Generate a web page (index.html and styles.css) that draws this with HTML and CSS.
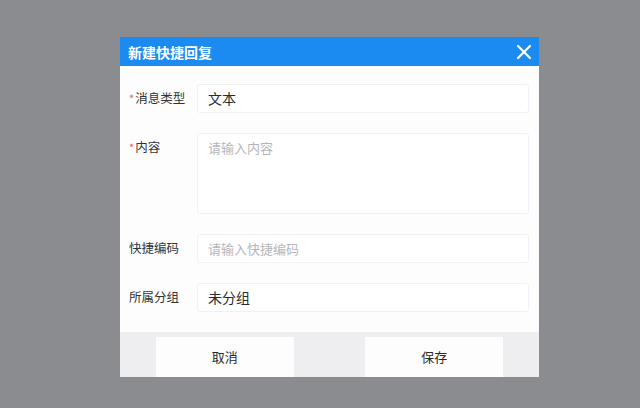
FILE: index.html
```html
<!DOCTYPE html>
<html>
<head>
    <meta charset="UTF-8">
    <title>新建快捷回复</title>
    <link rel="stylesheet" href="styles.css">
</head>
<body>
<div id="dialog">
    <div class="head">
        <span class="title">新建快捷回复</span>
        <span class="close">
            <svg width="16" height="16" viewBox="0 0 16 16"><path d="M2 2L14 14M14 2L2 14" stroke="#fff" stroke-width="2.2" stroke-linecap="round"/></svg>
        </span>
    </div>

    <div class="form">
        <div class="row">
            <label><i>*</i>消息类型</label>
            <div class="field">文本</div>
        </div>
        <div class="row">
            <label><i>*</i>内容</label>
            <div class="field area placeholder">请输入内容</div>
        </div>
        <div class="row">
            <label>快捷编码</label>
            <div class="field placeholder">请输入快捷编码</div>
        </div>
        <div class="row">
            <label>所属分组</label>
            <div class="field">未分组</div>
        </div>
    </div>

    <div class="foot">
        <div class="btn">取消</div>
        <div class="btn">保存</div>
    </div>
</div>
</body>
</html>
```

FILE: styles.css
```css
body{
    margin: 0;
    height: 408px;
    background-color: #8b8c8f;
    font-family: "Noto Sans CJK SC","Liberation Sans",sans-serif;
    overflow: hidden;
}

#dialog{
    width: 419px;
    margin: 37px 0 0 120px;
    background-color: #fdfdfe;
}
#dialog .head{
    display: flex;
    align-items: center;
    justify-content: space-between;
    height: 29px;
    padding: 0 7px 0 8px;
    background-color: #1b8bf1;
}
#dialog .head .title{
    font-size: 14px;
    font-weight: bold;
    color: #fff;
}
#dialog .head .close{
    display: flex;
}

#dialog .form{
    display: flex;
    flex-direction: column;
    gap: 20px;
    padding: 18px 10px 20px 9px;
}
#dialog .row{
    display: flex;
    align-items: flex-start;
}
#dialog .row label{
    width: 68px;
    flex-shrink: 0;
    line-height: 27px;
    font-size: 12.5px;
    color: #333;
}
#dialog .row label i{
    font-style: normal;
    color: #e0605a;
    font-size: 11px;
    margin-right: 1px;
}
#dialog .field{
    flex: 1;
    height: 29px;
    box-sizing: border-box;
    padding: 0 10px;
    border: 1px solid #f0f1f4;
    border-radius: 3px;
    background-color: #fff;
    line-height: 27px;
    font-size: 14px;
    color: #2b2b2b;
}
#dialog .field.placeholder{
    font-size: 13px;
    color: #b4b6bb;
}
#dialog .field.area{
    height: 81px;
    line-height: 27px;
}

#dialog .foot{
    display: flex;
    justify-content: space-around;
    height: 45px;
    padding-top: 5px;
    box-sizing: border-box;
    background-color: #eeeef0;
}
#dialog .foot .btn{
    width: 138px;
    height: 40px;
    background-color: #fdfdfe;
    line-height: 40px;
    text-align: center;
    font-size: 13px;
    color: #2a2a2a;
}
```
